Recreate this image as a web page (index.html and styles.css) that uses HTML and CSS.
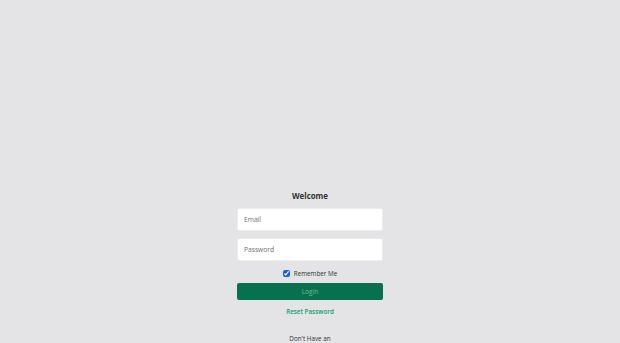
FILE: index.html
```html
<!DOCTYPE html>
<html>
<head>
<meta charset="utf-8">
<link rel="stylesheet" href="styles.css">
</head>
<body>
<main class="page">
  <form class="login">
    <h1 class="title">Welcome</h1>
    <input class="field" type="email" placeholder="Email">
    <input class="field" type="password" placeholder="Password">
    <label class="remember"><input type="checkbox" class="check" checked> Remember Me</label>
    <button type="button" class="btn">Login</button>
    <a class="reset" href="#">Reset Password</a>
    <p class="signup">Don't Have an</p>
  </form>
</main>
</body>
</html>
```
FILE: styles.css
```css
html, body {
  margin: 0;
  padding: 0;
  background: #e4e4e6;
  font-family: "Open Sans", "Liberation Sans", sans-serif;
}
.page {
  display: flex;
  justify-content: center;
  padding-top: 190px;
}
.login {
  width: 146px;
  display: flex;
  flex-direction: column;
  align-items: stretch;
}
.title {
  margin: 0 0 6px;
  font-size: 7.9px;
  line-height: 12px;
  font-weight: 700;
  color: #333;
  text-align: center;
}
.field {
  box-sizing: border-box;
  height: 23px;
  margin: 0 0 7px;
  border: 1px solid #ececec;
  border-radius: 2px;
  background: #fff;
  padding: 0 6px;
  font-family: inherit;
  font-size: 6.7px;
  color: #333;
  outline: none;
}
.field::placeholder { color: #6f6f6f; }
.remember {
  display: flex;
  align-items: center;
  justify-content: center;
  gap: 2px;
  margin-top: 1px;
  font-size: 6.3px;
  line-height: 9px;
  color: #333;
}
.check {
  width: 7px;
  height: 7px;
  margin: 0 2px 0 0;
  accent-color: #1a5fe0;
}
.btn {
  margin-top: 5px;
  height: 17px;
  border: none;
  border-radius: 2px;
  background: #07714f;
  color: #6fbf98;
  font-family: inherit;
  font-size: 6.6px;
  padding: 0;
}
.reset {
  margin-top: 7px;
  text-align: center;
  font-size: 6.3px;
  line-height: 10px;
  font-weight: 600;
  color: #10a06e;
  text-decoration: none;
}
.signup {
  margin: 17px 0 0;
  text-align: center;
  font-size: 6.3px;
  line-height: 10px;
  color: #333;
}
```
